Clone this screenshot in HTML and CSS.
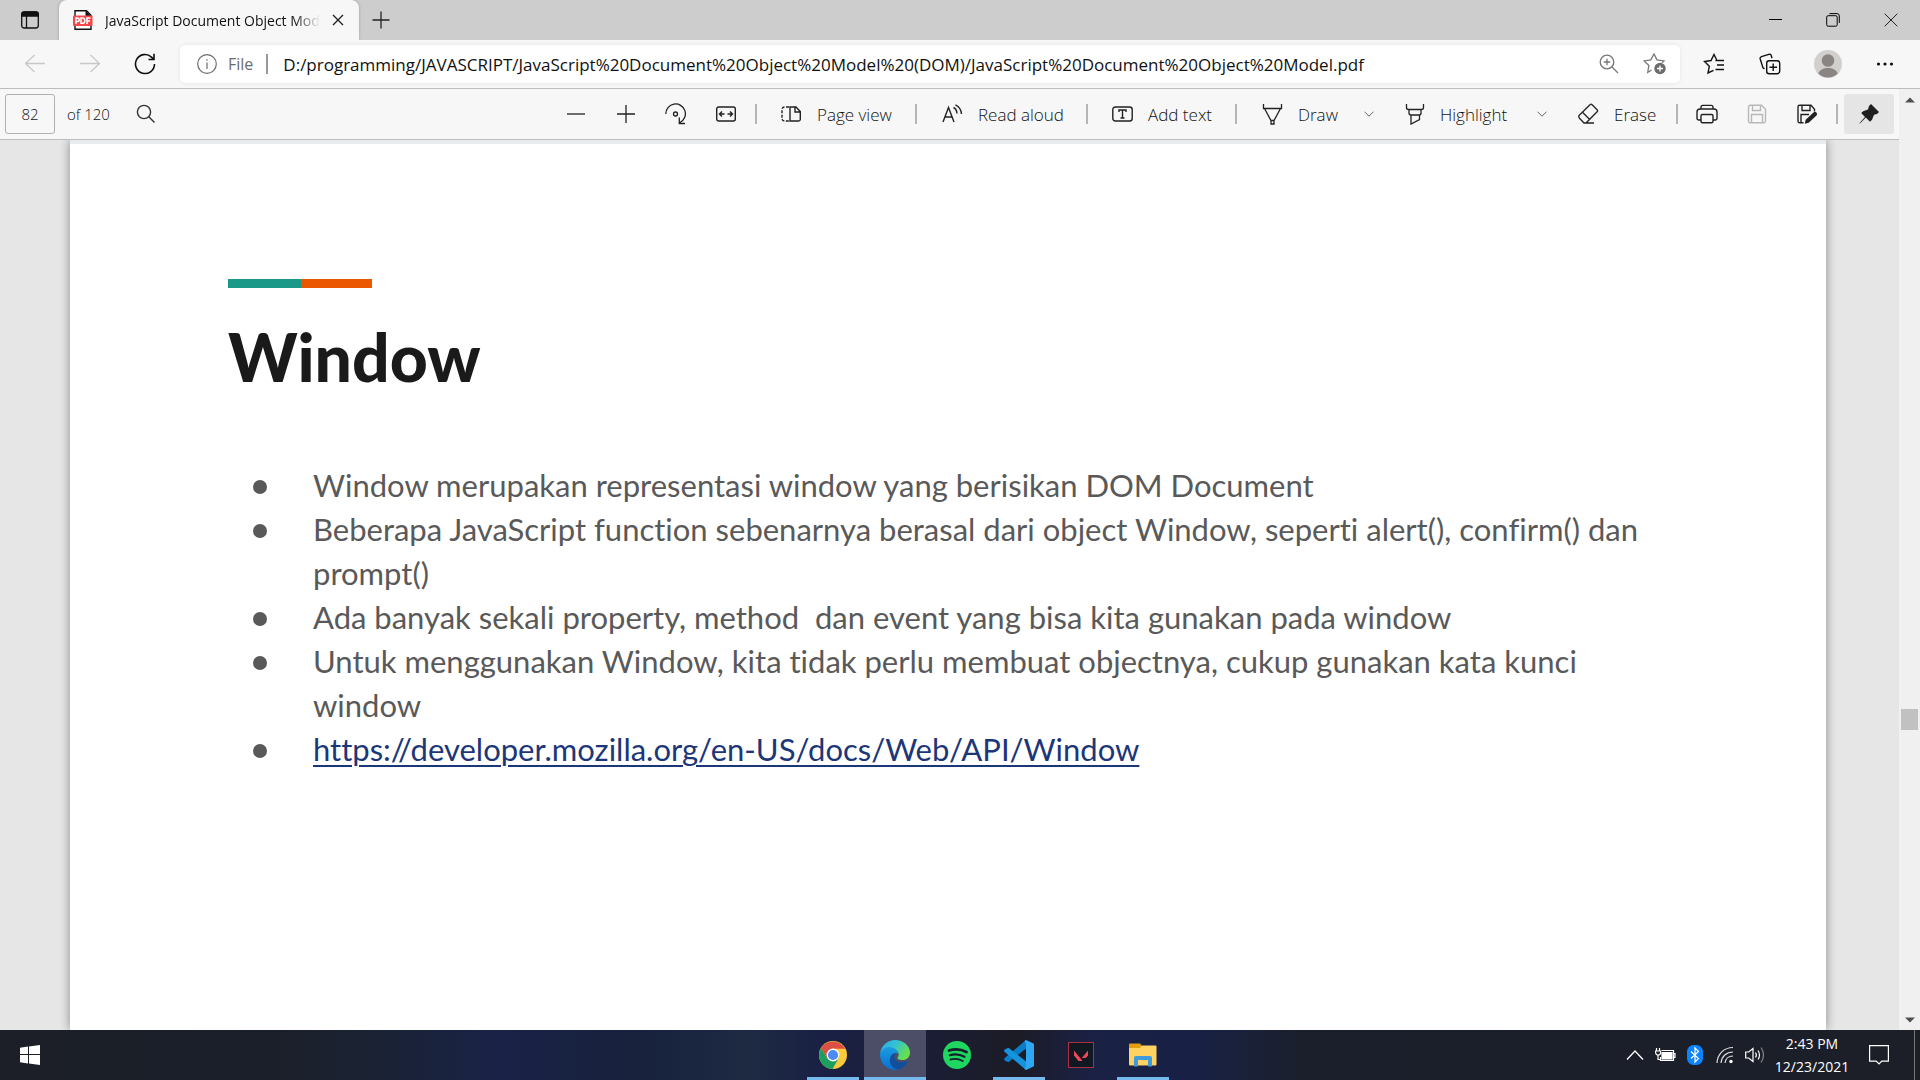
FILE: index.html
```html
<!DOCTYPE html>
<html lang="en">
<head>
<meta charset="utf-8">
<title>JavaScript Document Object Model</title>
<link rel="stylesheet" href="styles.css">
</head>
<body>
<div class="desktop">
  <header class="tabstrip">
    <button class="tab-actions" aria-label="Tab actions menu">
      <svg width="20" height="20" viewBox="0 0 20 20" fill="none" stroke="#111" stroke-width="1.3"><rect x="1.7" y="2" width="16.600" height="16" rx="2.500"/><path d="M1.700 6V4.500A2.500 2.500 0 0 1 4.200 2h11.600a2.500 2.500 0 0 1 2.500 2.500V6z" fill="#111"/><path d="M6.500 6v12"/></svg>
    </button>
    <div class="tab">
      <svg width="20" height="20" viewBox="0 0 20 20"><path d="M2 .8h11.500L18 5.300V19.200H2z" fill="#fff" stroke="#111" stroke-width="1.400"/><path d="M13 1v5h5" fill="#111" stroke="#111"/><rect x="0" y="5.500" width="19.500" height="10.500" rx="1" fill="#f5474b"/><g fill="none" stroke="#fff" stroke-width="1.500"><path d="M3 14V8h1.500a1.700 1.700 0 0 1 0 3.500H3M8 8v5.300h1.200a2.400 2.400 0 0 0 0-5.300zM14 14V8h3.500M14 11h3"/></g></svg>
      <span class="tab-title">JavaScript Document Object Model</span>
      <button class="tab-close" aria-label="Close tab"><svg width="12" height="12" viewBox="0 0 12 12" fill="none" stroke="#222" stroke-width="1.400"><path d="M1 1l10 10M11 1L1 11"/></svg></button>
    </div>
    <button class="new-tab" aria-label="New tab"><svg width="18" height="18" viewBox="0 0 18 18" fill="none" stroke="#222" stroke-width="1.300"><path d="M9 .5v17M.5 9h17"/></svg></button>
    <div class="window-controls">
      <button aria-label="Minimize"><svg width="14" height="14" viewBox="0 0 14 14" fill="none" stroke="#000"><path d="M1 6.500h13"/></svg></button>
      <button aria-label="Restore"><svg width="14" height="14" viewBox="0 0 14 14" fill="none" stroke="#000"><rect x=".7" y="2.700" width="10.500" height="10.500" rx="1.500"/><path d="M3.500.6h7.500a2.300 2.300 0 0 1 2.300 2.300v7"/></svg></button>
      <button aria-label="Close"><svg width="14" height="14" viewBox="0 0 14 14" fill="none" stroke="#222"><path d="M.7.7l12.600 12.600M13.300.7L.7 13.300"/></svg></button>
    </div>
  </header>

  <nav class="navbar">
    <div class="nav-buttons">
      <button aria-label="Back" disabled><svg width="22" height="22" viewBox="0 0 22 22" fill="none" stroke="#c8c8c8" stroke-width="1.300"><path d="M21 10.500H1.500M10.500 2l-9 8.500 9 8.500"/></svg></button>
      <button aria-label="Forward" disabled><svg width="22" height="22" viewBox="0 0 22 22" fill="none" stroke="#c8c8c8" stroke-width="1.300"><path d="M1 10.500h19.500M11.500 2l9 8.500-9 8.500"/></svg></button>
      <button aria-label="Refresh"><svg width="22" height="22" viewBox="0 0 22 22" fill="none" stroke="#111" stroke-width="1.600"><path d="M20.500 11a9.500 9.500 0 1 1-3-6.900l2 2M20 .8v5.700h-5.500"/></svg></button>
    </div>
    <div class="address">
      <svg width="20" height="20" viewBox="0 0 20 20" fill="none" stroke="#6b6b6b" stroke-width="1.200"><circle cx="10" cy="10" r="9.300"/><path d="M10 8.500V15M10 5.200v1.500"/></svg>
      <label class="scheme" for="url">File</label>
      <input class="url" id="url" type="text" value="D:/programming/JAVASCRIPT/JavaScript%20Document%20Object%20Model%20(DOM)/JavaScript%20Document%20Object%20Model.pdf">
      <button aria-label="Zoom"><svg width="20" height="20" viewBox="0 0 20 20" fill="none" stroke="#777" stroke-width="1.300"><circle cx="8" cy="8" r="6.800"/><path d="M13 13l6 6M8 4.800v6.400M4.800 8h6.400"/></svg></button>
      <button aria-label="Add to favorites"><svg width="24" height="22" viewBox="0 0 24 22" fill="none" stroke="#777" stroke-width="1.300"><path d="M8.500 17l-3.800 2.500 1.200-7L1 7.900l6.800-1L11 1l3 5.900 7 1-2 2"/><circle cx="17" cy="15.500" r="5.700" fill="#6b6b6b" stroke="none"/><path d="M17 12.500v6M14 15.500h6" stroke="#fff"/></svg></button>
    </div>
    <div class="nav-actions">
      <button aria-label="Favorites"><svg width="22" height="22" viewBox="0 0 22 22" fill="none" stroke="#111" stroke-width="1.400"><path d="M10.500 17.300L5 20l1.300-6.700L1.500 8.500l6.500-1L11 1.500l2.600 5.300M12.500 7.500H21M14 12h7M12.500 16.500H21"/></svg></button>
      <button aria-label="Collections"><svg width="24" height="22" viewBox="0 0 24 22" fill="none" stroke="#111" stroke-width="1.400"><rect x="7.700" y="7.700" width="13" height="13" rx="2.500"/><path d="M14.200 10.500v7.500M10.500 14.200H18M5.500 15.800L4 14.900 1.200 6A2 2 0 0 1 2.500 3.600L9.800 1.300a2 2 0 0 1 2.500 1.400l.7 2.500"/></svg></button>
      <button aria-label="Profile"><svg width="28" height="28" viewBox="0 0 28 28"><circle cx="14" cy="14" r="14" fill="#d2d0ce"/><circle cx="14" cy="10.500" r="6.300" fill="#8a8583"/><path d="M4.300 23.500c2-7.500 17.400-7.500 19.400 0A13.500 13.500 0 0 1 4.300 23.500" fill="#8a8583"/></svg></button>
      <button aria-label="Settings and more"><svg width="18" height="6" viewBox="0 0 18 6" fill="#111"><circle cx="2.500" cy="3" r="1.600"/><circle cx="9" cy="3" r="1.600"/><circle cx="15.500" cy="3" r="1.600"/></svg></button>
    </div>
  </nav>

  <div class="content">
    <div class="reader">
      <div class="toolbar">
        <div class="pager">
          <input class="page-number" id="page" type="text" value="82">
          <label for="page">of 120</label>
          <button aria-label="Search"><svg width="20" height="20" viewBox="0 0 20 20" fill="none" stroke="#333" stroke-width="1.400"><circle cx="8" cy="8" r="6.600"/><path d="M12.800 12.800l5.700 5.700"/></svg></button>
        </div>
        <div class="tools">
          <button class="tool" aria-label="Zoom out"><svg width="20" height="20" viewBox="0 0 20 20" fill="none" stroke="#222" stroke-width="1.300"><path d="M1 10h18"/></svg></button>
          <button class="tool" aria-label="Zoom in"><svg width="20" height="20" viewBox="0 0 20 20" fill="none" stroke="#222" stroke-width="1.300"><path d="M1 10h18M10 1v18"/></svg></button>
          <button class="tool" aria-label="Rotate"><svg width="22" height="22" viewBox="0 0 22 22" fill="none" stroke="#222" stroke-width="1.300"><path d="M.8 11A9.800 9.800 0 1 1 15 19.500M14.300 14.500v6H20"/><circle cx="10.500" cy="11" r="2"/></svg></button>
          <button class="tool" aria-label="Fit to width"><svg width="20" height="16" viewBox="0 0 20 16" fill="none" stroke="#222" stroke-width="1.400"><rect x=".7" y="1" width="18.600" height="14" rx="2"/><path d="M3.500 8h5M11.500 8h5M6 5.500L3.500 8 6 10.500M14 5.500L16.500 8 14 10.500"/></svg></button>
          <span class="sep"></span>
          <button class="tool tool-view"><svg width="21" height="20" viewBox="0 0 21 20" fill="none" stroke="#222" stroke-width="1.400"><path d="M8 3H3.500A2.500 2.500 0 0 0 1 5.500v9A2.500 2.500 0 0 0 3.500 17H8" stroke-dasharray="3 1.500"/><path d="M9 3h6l4.300 4.500v8A1.700 1.700 0 0 1 17.500 17H9zM14 3v5h5"/></svg>Page view</button>
          <span class="sep"></span>
          <button class="tool tool-read"><svg width="22" height="20" viewBox="0 0 22 20" fill="none" stroke="#222" stroke-width="1.400"><path d="M2 18L7.500 3.500 13 18M4 13h7M12.500 3.500c2 1 3.300 3 3.500 6M14.500.8c3.800 2 5.800 5.200 6 9.200"/></svg>Read aloud</button>
          <span class="sep"></span>
          <button class="tool tool-text"><svg width="21" height="16" viewBox="0 0 21 16" fill="none" stroke="#222" stroke-width="1.400"><rect x=".8" y="1" width="19.400" height="14" rx="2.500"/><path d="M7 6V4h7v2M10.500 4v8M8.500 12h4"/></svg>Add text</button>
          <span class="sep"></span>
          <button class="tool tool-draw"><svg width="22" height="22" viewBox="0 0 22 22" fill="none" stroke="#222" stroke-width="1.300"><path d="M2.500 1v4.500h18V1M3.500 5.500l6.500 12h3l6.500-12M10 17.500V21h3v-3.500"/></svg>Draw</button>
          <button class="tool-menu" aria-label="Draw options"><svg width="10" height="6" viewBox="0 0 10 6" fill="none" stroke="#666"><path d="M.5.700L5 5.200 9.500.700"/></svg></button>
          <button class="tool tool-highlight"><svg width="20" height="22" viewBox="0 0 20 22" fill="none" stroke="#222" stroke-width="1.300"><path d="M1.500 1v3.500a2 2 0 0 0 2 2h13a2 2 0 0 0 2-2V1M4 6.500V10a2 2 0 0 0 2 2h8a2 2 0 0 0 2-2V6.500M6 12v9l8.500-4.500V12"/></svg>Highlight</button>
          <button class="tool-menu" aria-label="Highlight options"><svg width="10" height="6" viewBox="0 0 10 6" fill="none" stroke="#666"><path d="M.5.700L5 5.200 9.500.700"/></svg></button>
          <button class="tool tool-erase"><svg width="21" height="22" viewBox="0 0 21 22" fill="none" stroke="#222" stroke-width="1.300"><path d="M1.500 12L12 1.700a1.500 1.500 0 0 1 2.100 0l5 5a1.500 1.500 0 0 1 0 2.100L8 20H6l-4.500-4.800a2.300 2.300 0 0 1 0-3.200zM4.500 9.300l7 7M8 20h8"/></svg>Erase</button>
          <span class="sep"></span>
          <button class="tool" aria-label="Print"><svg width="22" height="20" viewBox="0 0 22 20" fill="none" stroke="#222" stroke-width="1.400"><path d="M5 4.500V3.200A1.800 1.800 0 0 1 6.800 1.400h8.400A1.800 1.800 0 0 1 17 3.200v1.300M5 16H2.800A1.800 1.800 0 0 1 1 14.200V8a3 3 0 0 1 3-3h14a3 3 0 0 1 3 3v6.200a1.800 1.800 0 0 1-1.800 1.800H17"/><rect x="5" y="10.500" width="12" height="8.200" rx="1.500"/></svg></button>
          <button class="tool" aria-label="Save" disabled><svg width="20" height="20" viewBox="0 0 20 20" fill="none" stroke="#b8b8b8" stroke-width="1.400"><path d="M1.500 3A1.700 1.700 0 0 1 3.200 1.300h11.300l4 4V17a1.700 1.700 0 0 1-1.700 1.700H3.200A1.700 1.700 0 0 1 1.500 17zM5.500 1.500v5h8v-5M4.500 18.500v-8h11v8"/></svg></button>
          <button class="tool" aria-label="Save as"><svg width="22" height="20" viewBox="0 0 22 20" fill="none" stroke="#222" stroke-width="1.400"><path d="M7.500 18.700H3.700A1.700 1.700 0 0 1 2 17V3A1.700 1.700 0 0 1 3.700 1.300H15l3.500 4v2.200M6 1.500v5h8v-5M5 18.500v-8h8"/><path d="M8.700 19.800l1-4 7.800-7.200a2 2 0 0 1 3 2.800l-7.800 7.400z" fill="#222" stroke="none"/></svg></button>
          <span class="sep"></span>
          <button class="tool tool-pin" aria-label="Unpin toolbar" aria-pressed="true"><svg width="22" height="22" viewBox="0 0 22 22" fill="#1f1f1f"><path d="M13 1l8 8-2 2-3 .7-2 5-2 2-4.200-4.200L2.500 20l-1.200.8.800-1.300L7 14 3.200 10l2-1.800 4.800-1.800L11 3z"/></svg></button>
        </div>
      </div>
      <main class="viewer">
        <article class="slide">
          <div class="accent"></div>
          <h1>Window</h1>
          <ul>
            <li>Window merupakan representasi window yang berisikan DOM Document</li>
            <li>Beberapa JavaScript function sebenarnya berasal dari object Window, seperti alert(), confirm() dan prompt()</li>
            <li>Ada banyak sekali property, method&nbsp; dan event yang bisa kita gunakan pada window</li>
            <li>Untuk menggunakan Window, kita tidak perlu membuat objectnya, cukup gunakan kata kunci window</li>
            <li><a href="https://developer.mozilla.org/en-US/docs/Web/API/Window">https://developer.mozilla.org/en-US/docs/Web/API/Window</a></li>
          </ul>
        </article>
      </main>
    </div>
    <div class="scrollbar">
      <button aria-label="Scroll up"><svg width="10" height="6" viewBox="0 0 10 6" fill="#505050"><path d="M0 5.500L5 .5l5 5z"/></svg></button>
      <div class="track"><div class="thumb"></div></div>
      <button aria-label="Scroll down"><svg width="10" height="6" viewBox="0 0 10 6" fill="#505050"><path d="M0 .5h10l-5 5z"/></svg></button>
    </div>
  </div>

  <footer class="taskbar">
    <button class="start" aria-label="Start"><svg width="20" height="20" viewBox="0 0 20 20" fill="#fff"><path d="M0 2.700L8 1.600V9H0zM9 1.400L20 0v9H9zM0 10h8v8.400L0 17.300zM9 10h11v10L9 18.600z"/></svg></button>
    <div class="apps">
      <button class="app running" aria-label="Google Chrome"><svg width="28" height="28" viewBox="0 0 28 28"><circle cx="14" cy="14" r="14" fill="#fbc93d"/><path d="M14 14L8.300 17.500 1.900 7A14 14 0 0 1 26.100 7.700H14z" fill="#dd4f43"/><path d="M1.900 7A14 14 0 0 0 13.500 28L19.500 17.500 14 14 8.300 17.500z" fill="#1a9f5e"/><circle cx="14" cy="14" r="6.400" fill="#fff"/><circle cx="14" cy="14" r="5.100" fill="#4a8af4"/></svg></button>
      <button class="app running active" aria-label="Microsoft Edge"><svg width="30" height="30" viewBox="0 0 30 30"><defs><linearGradient id="edge-top" x1="0" y1="0" x2="1" y2=".5"><stop offset="0" stop-color="#2aa8e8"/><stop offset=".5" stop-color="#33c3d4"/><stop offset="1" stop-color="#66e04a"/></linearGradient><linearGradient id="edge-side" x1="0" y1="0" x2="0" y2="1"><stop offset="0" stop-color="#1b9de2"/><stop offset="1" stop-color="#0a6fd0"/></linearGradient></defs><path d="M0 13.500C1.500 5 8 0 15 0c8.500 0 15 6 15 12.500 0 5-3.500 7.500-7.500 7.500-4 0-5.500-1.500-5-2.500 1.500-1.500 1.500-4 0-6C14 7 4 7 0 13.500z" fill="url(#edge-top)"/><path d="M0 14C2 8.500 6.500 7 9.500 7c4.500 0 8.500 3 8.500 6.500-3-1.500-7 0-7 6 0 4.500 3 8.500 8 9.800C9.500 32 0 25 0 14z" fill="url(#edge-side)"/><path d="M14 13.500c-4 2-5 6-3.500 10 1.500 4 5 6 9 6 3.800-1.500 6.800-4.500 8-7.500.3-1-.3-1.300-1-.9-4 2-10 1-11.500-2.200-.8-1.800-.8-3.600.5-5z" fill="#124f9c"/></svg></button>
      <button class="app" aria-label="Spotify"><svg width="28" height="28" viewBox="0 0 28 28"><circle cx="14" cy="14" r="14" fill="#1ed760"/><g fill="none" stroke="#15202a" stroke-linecap="round"><path d="M6 9.500c6-1.800 12.500-1.200 17.500 1.500" stroke-width="2.700"/><path d="M6.800 14.200c5-1.400 10.500-.8 14.700 1.600" stroke-width="2.200"/><path d="M7.500 18.500c4.200-1 8.700-.5 12.300 1.500" stroke-width="1.800"/></g></svg></button>
      <button class="app running" aria-label="Visual Studio Code"><svg width="30" height="30" viewBox="0 0 30 30"><path d="M22 0v8.500L4.500 22.300 1 20.700c-1.200-1-1.200-2 0-3z" fill="#0a7cc8"/><path d="M22 30v-8.500L4.500 7.700 1 9.300c-1.200 1-1.200 2 0 3z" fill="#1494dc"/><path d="M22 0l7 3.300c.7.300 1 .8 1 1.500v20.400c0 .7-.3 1.200-1 1.500L22 30l-1.500-1 1.500-3V4l-1.500-3z" fill="#2ea8f2"/></svg></button>
      <button class="app" aria-label="Valorant"><svg width="26" height="26" viewBox="0 0 26 26"><rect x=".5" y=".5" width="25" height="25" fill="#101822" stroke="#a8323f"/><path d="M6 8.500l8.500 10.500H10.500L6 13.500zM20 8.500v5L17.800 16h-4z" fill="#f2475a"/></svg></button>
      <button class="app running" aria-label="File Explorer"><svg width="28" height="24" viewBox="0 0 28 24"><path d="M0 1.500A1 1 0 0 1 1 .5h10l2 2.500v5H0z" fill="#e59f0e"/><path d="M13 2.500h13.500a1 1 0 0 1 1 1v18a1 1 0 0 1-1 1H1a1 1 0 0 1-1-1V5h11z" fill="#ffd262"/><path d="M5 23.500V15a2 2 0 0 1 2-2h14a2 2 0 0 1 2 2v8.500h-4V17H9v6.500z" fill="#3f9bdc"/></svg></button>
    </div>
    <div class="tray">
      <button class="tray-icon" aria-label="Show hidden icons"><svg width="18" height="12" viewBox="0 0 18 12" fill="none" stroke="#fff" stroke-width="1.300"><path d="M1 10.500l8-8.500 8 8.500"/></svg></button>
      <button class="tray-icon" aria-label="Battery"><svg width="21" height="14" viewBox="0 0 21 14" fill="none" stroke="#fff" stroke-width="1.200"><path d="M6.500 2.500h12v10H5.500V9M18.500 5.500h1.500v4h-1.500M1.500 0v3M4.500 0v3M3 7v4.500h2.500"/><path d="M.6 3h5v1.500a2.500 2.500 0 0 1-5 0z"/><path d="M7 4.500h10v6.500H7z" fill="#fff" stroke="#fff"/></svg></button>
      <button class="tray-icon" aria-label="Bluetooth"><svg width="16" height="20" viewBox="0 0 16 20"><rect width="16" height="20" rx="6.500" fill="#0a84ff"/><path d="M4 6.500l7.500 7L8 17V3l3.500 3.500-7.500 7" fill="none" stroke="#fff" stroke-width="1.200"/></svg></button>
      <button class="tray-icon" aria-label="Network"><svg width="18" height="18" viewBox="0 0 18 18" fill="none" stroke="#ddd" stroke-width="1.200"><path d="M1 17C1.500 8 8 1.500 17 1.500M5 17C5.500 10.500 10.500 6 17 6M9 17c.5-4 3.500-7 8-7"/><circle cx="15" cy="15.500" r="1.700" fill="#fff" stroke="none"/></svg></button>
      <button class="tray-icon" aria-label="Volume"><svg width="20" height="18" viewBox="0 0 20 18" fill="none" stroke="#fff" stroke-width="1.200"><path d="M.7 6h3L8 2.500v13L3.700 12h-3z"/><path d="M10.500 6.500c1 1.500 1 3.500 0 5M13 4.500c2 2.500 2 6.500 0 9"/><path d="M16 1.500c3.300 4.500 3.300 10.500 0 15" stroke="#888"/></svg></button>
      <button class="clock"><span>2:43 PM</span><span>12/23/2021</span></button>
      <button class="notifications" aria-label="Notifications"><svg width="20" height="20" viewBox="0 0 20 20" fill="none" stroke="#fff" stroke-width="1.200"><path d="M.6.600h18.800v15.500h-6.600L10 19l-2.800-2.900H.6z"/></svg></button>
      <button class="show-desktop" aria-label="Show desktop"></button>
    </div>
  </footer>
</div>
</body>
</html>
```
FILE: styles.css
```css
* { box-sizing: border-box; }

body {
  margin: 0;
  font-family: "Open Sans", "Noto Sans", sans-serif;
  font-size: 16px;
  color: #333;
}

button {
  display: flex;
  align-items: center;
  justify-content: center;
  margin: 0;
  padding: 0;
  border: 0;
  background: none;
  color: inherit;
  font: inherit;
}

input { margin: 0; border: 0; padding: 0; background: none; font: inherit; color: inherit; }
svg { flex: none; display: block; }

.desktop { display: flex; flex-direction: column; min-height: 100vh; }

/* Tab strip */
.tabstrip { display: flex; height: 40px; background: #cdcdcd; }
.tab-actions { width: 59px; }
.tab {
  display: flex;
  align-items: center;
  width: 300px;
  padding: 0 13px 0 14px;
  border-radius: 8px 8px 0 0;
  background: #f7f7f7;
  box-shadow: 0 0 3px rgba(0, 0, 0, .25);
}
.tab-title {
  flex: 1;
  margin: 0 10px 0 12px;
  overflow: hidden;
  white-space: nowrap;
  font-size: 14px;
  color: #111;
  -webkit-mask-image: linear-gradient(to right, #000 88%, transparent);
  mask-image: linear-gradient(to right, #000 88%, transparent);
}
.tab-close { width: 16px; height: 24px; }
.new-tab { width: 43px; }
.window-controls { display: flex; margin-left: auto; }
.window-controls button { width: 58px; }

/* Address row */
.navbar {
  display: flex;
  align-items: center;
  height: 49px;
  padding: 0 7px;
  border-bottom: 1px solid #bdbdbd;
  background: #f7f7f7;
  position: relative;
}
.nav-buttons, .nav-actions { display: flex; }
.nav-buttons button { width: 55px; height: 38px; }
.nav-actions button { width: 57px; height: 38px; }
.address {
  flex: 1;
  display: flex;
  align-items: center;
  height: 38px;
  margin: 0 5px 0 8px;
  padding: 0 2px 0 17px;
  border-radius: 5px;
  background: #fff;
  box-shadow: 0 0 4px rgba(0, 0, 0, .08);
}
.scheme {
  margin: 0 15px 0 11px;
  padding-right: 13px;
  border-right: 2px solid #999;
  line-height: 20px;
  color: #6b6b6b;
}
.url { flex: 1; min-width: 0; height: 32px; font-size: 17px; color: #111; }
.address button { width: 46px; height: 38px; }

/* Content area */
.content { flex: 1; display: flex; }
.reader { flex: 1; display: flex; flex-direction: column; min-width: 0; }
.toolbar {
  display: flex;
  justify-content: space-between;
  align-items: center;
  height: 51px;
  padding: 0 5px;
  border-bottom: 1px solid #bdbdbd;
  background: #f7f7f7;
}
.pager { display: flex; align-items: center; font-size: 15px; font-weight: 300; color: #111; }
.page-number {
  width: 50px;
  height: 40px;
  margin-right: 12px;
  border: 1px solid #b0b0b0;
  border-radius: 3px;
  text-align: center;
}
.pager button { width: 40px; height: 40px; margin-left: 16px; }
.tools { display: flex; align-items: center; font-size: 17px; font-weight: 300; color: #111; }
.tool { width: 50px; height: 40px; border-radius: 3px; white-space: nowrap; }
.tool-view, .tool-read, .tool-text, .tool-draw, .tool-highlight, .tool-erase {
  justify-content: flex-start;
  gap: 15px;
  padding-left: 20px;
}
.tool-view { width: 150px; }
.tool-read { width: 161px; }
.tool-text { width: 139px; }
.tool-draw { width: 111px; }
.tool-highlight { width: 140px; }
.tool-erase { width: 114px; }
.tool-menu { width: 33px; height: 40px; }
.tool-pin { margin-left: 2px; background: #e5e5e5; }
.sep { width: 2px; height: 20px; margin: 0 4px; background: #b5b5b5; }

.viewer { flex: 1; display: flex; padding: 0 73px 0 70px; background: #e6e6e6; }
.slide {
  flex: 1;
  padding: 135px 138px 40px 158px;
  border-top: 4px solid #e8ecee;
  background: #fff;
  box-shadow: 0 0 10px rgba(0, 0, 0, .4);
  clip-path: inset(0 -10px);
  font-family: Lato, sans-serif;
}
.accent {
  width: 144px;
  height: 9px;
  background: linear-gradient(to right, #1a9988 73px, #eb5600 73px);
}
h1 {
  margin: 29px 0 0;
  font-size: 66px;
  line-height: 80px;
  font-weight: 900;
  color: #1a1a1a;
}
ul {
  margin: 66px 0 0;
  padding: 0;
  list-style: none;
  font-size: 31px;
  line-height: 44px;
  font-variant-ligatures: none;
  color: #595959;
}
li { display: flex; }
li::before {
  content: "";
  flex: none;
  width: 14px;
  height: 14px;
  margin: 17px 46px 0 25px;
  border-radius: 50%;
  background: #595959;
}
ul a { color: #1c3678; text-decoration-thickness: 2px; text-underline-offset: 4px; }

.scrollbar { display: flex; flex-direction: column; width: 21px; background: #f0f0f0; }
.scrollbar button { height: 21px; }
.track { flex: 1; display: flex; flex-direction: column; padding: 0 2px; }
.track::before { content: ""; flex: 600; }
.track::after { content: ""; flex: 280; }
.thumb { height: 21px; background: #c1c1c1; }

/* Taskbar */
.taskbar {
  display: grid;
  grid-template-columns: 802fr 372px 746fr;
  height: 50px;
  color: #fff;
  background: linear-gradient(to right, #1c1f28 0%, #1b1f29 14%, #1a2232 19%, #1a2347 26%, #17213c 33%, #1d2a42 39%, #1a2045 43%, #1b1d33 49%, #1c1c26 53%, #1a2145 57%, #182145 62%, #1b1f2b 68%, #1c1f28 100%);
}
.start { width: 60px; height: 50px; }
.apps { display: flex; }
.app { width: 62px; height: 50px; position: relative; }
.app.active { background: #4b4e66; }
.app.running::after {
  content: "";
  position: absolute;
  inset: auto 5px 0;
  height: 3px;
  background: #76b9ed;
}
.app.active::after { inset: auto 0 0; }
.tray { display: flex; justify-content: flex-end; align-items: center; }
.tray-icon { width: 30px; height: 50px; }
.clock {
  flex-direction: column;
  width: 84px;
  font-size: 14px;
  line-height: 23px;
}
.notifications { width: 50px; height: 50px; }
.show-desktop { width: 6px; height: 50px; margin-left: 10px; border-left: 1px solid #777; }
```
